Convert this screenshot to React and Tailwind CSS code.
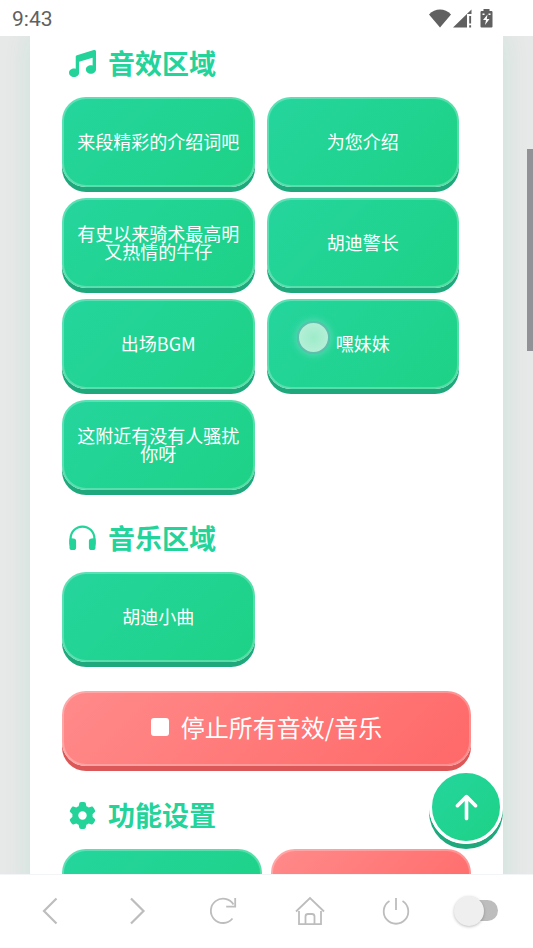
import { useState } from 'react';
import { FaMusic, FaGear, FaArrowUp } from 'react-icons/fa6';

const effects = [
    '来段精彩的介绍词吧',
    '为您介绍',
    '有史以来骑术最高明又热情的牛仔',
    '胡迪警长',
    '出场BGM',
    '嘿妹妹',
    '这附近有没有人骚扰你呀',
];

const songs = ['胡迪小曲'];

const green = 'border-2 border-white/25 bg-linear-135 from-[#25d59d] to-[#1dd286] bg-origin-border shadow-[0_5px_0_#1fa87c]';
const red = 'border-2 border-white/25 bg-linear-135 from-[#ff8a8a] to-[#ff6868] bg-origin-border shadow-[0_5px_0_#dc5858]';

function StatusBar() {
    return (
        <header className="flex h-9 shrink-0 items-center justify-between bg-white pt-px pl-3 pr-10 text-[#606060]">
            <span className="font-['Roboto',sans-serif] text-[21px] leading-6">9:43</span>
            <div className="flex items-center pb-px">
                <svg width="22" height="19" viewBox="0 0 22 19" fill="currentColor">
                    <path d="M11 18.500L0 5.500C6-1.200 16-1.200 22 5.500Z" />
                </svg>
                <svg className="ml-0.5" width="20" height="19" viewBox="0 0 20 19" fill="currentColor">
                    <path d="M0 18.500L18.500 0.500V5H14V18.500ZM16.200 7h1.900v7.500H16.200ZM16.200 16.300h1.900v2.200H16.200Z" />
                </svg>
                <svg className="ml-[7px]" width="13" height="19" viewBox="0 0 13 19">
                    <path fill="currentColor" d="M3.500 0h6v2H11.500Q12.500 2 12.500 3.200V17.500Q12.500 18.500 11.500 18.500H1.500Q0.500 18.500 0.500 17.500V3.200Q0.500 2 1.500 2H3.500Z" />
                    <path fill="#fff" d="M7.500 5.500L3 11h3l-1 5 4.500-6H6.800ZM2.500 4.500h2V6h-2ZM8.500 4.500h2V6h-2Z" />
                </svg>
            </div>
        </header>
    );
}

function HeadphonesIcon() {
    return (
        <svg width="27" height="27" viewBox="0 0 27 27" fill="currentColor">
            <path d="M1.600 19V13.500a11.900 11.900 0 0 1 23.800 0V19" fill="none" stroke="currentColor" strokeWidth="2.200" />
            <rect x="0.500" y="13.500" width="6.600" height="11.500" rx="2.600" />
            <rect x="19.900" y="13.500" width="6.600" height="11.500" rx="2.600" />
            <path d="M0.500 13.500h3v7h-3ZM23.500 13.500h3v7h-3Z" />
        </svg>
    );
}

function SectionTitle({ icon: Icon, children }) {
    return (
        <h2 className="mb-4 flex items-center gap-3 pl-[7px] text-[27px] leading-9 font-bold text-[#23d39a]">
            <Icon />
            {children}
        </h2>
    );
}

function SoundButton({ label, touched }) {
    return (
        <button type="button" className={`relative h-[90px] rounded-3xl px-3 pb-[3px] text-lg leading-[18px] text-white ${green}`}>
            {label}
            {touched && (
                <span className="absolute top-5 left-7 size-[33px] rounded-full border-2 border-[#5cc0ac] bg-radial from-[#9debc9] to-[#bdf1dd] shadow-[0_0_6px_2px_#50d8b0]" />
            )}
        </button>
    );
}

function SoundGrid({ items, touchedItem }) {
    return (
        <div className="grid grid-cols-2 gap-x-3 gap-y-[11px] pr-3">
            {items.map((item) => (
                <SoundButton key={item} label={item} touched={item === touchedItem} />
            ))}
        </div>
    );
}

function NavButton({ label, children }) {
    return (
        <button type="button" aria-label={label} className="flex items-center justify-center">
            <svg width="30" height="30" viewBox="0 0 30 30" fill="none" stroke="#bdbdbd" strokeWidth="1.8">
                {children}
            </svg>
        </button>
    );
}

function BottomBar() {
    const [on, setOn] = useState(false);

    return (
        <nav className="grid h-[74px] shrink-0 grid-cols-6 items-center border-t border-gray-100 bg-white px-2 pb-0.5">
            <NavButton label="后退">
                <path d="M20.500 2.500L8 15l12.500 12.500" strokeWidth="2.200" />
            </NavButton>
            <NavButton label="前进">
                <path d="M9 2.500L21.500 15 9 27.500" strokeWidth="2.200" />
            </NavButton>
            <NavButton label="刷新">
                <path d="M24.500 22.500A12.200 12.200 0 1 1 25.500 8.500M27.200 2v8.700h-9" />
            </NavButton>
            <NavButton label="主页">
                <path d="M1 15.500L15 2l14 13.500M4 15v13.200h22V15M10.500 28V20.500q0-2.500 2.500-2.500h4q2.500 0 2.500 2.500v7.500" />
            </NavButton>
            <NavButton label="退出">
                <path d="M8.500 5a12.300 12.300 0 1 0 13 0M15 2v12" />
            </NavButton>
            <label className="flex items-center justify-center pr-3">
                <input
                    type="checkbox"
                    aria-label="开关"
                    checked={on}
                    onChange={() => setOn(!on)}
                    className="peer sr-only"
                />
                <span className="flex h-[21px] w-11 items-center rounded-full bg-linear-to-r from-transparent from-25% to-[#bdbdbd] to-25% peer-checked:justify-end">
                    <span className="size-[30px] rounded-full bg-[#efefef] shadow-[0_1px_3px_rgba(0,0,0,0.25)]" />
                </span>
            </label>
        </nav>
    );
}

export default function App() {
    return (
        <div className="flex h-screen flex-col overflow-hidden bg-white font-['Noto_Sans_CJK_SC',sans-serif]">
            <StatusBar />
            <main className="relative min-h-0 flex-1 overflow-hidden bg-[#e7e8e8] px-[30px]">
                <div className="min-h-full bg-white px-8 pt-[9px] pb-10 shadow-[0_0_24px_rgba(30,210,150,0.14)]">
                    <section>
                        <SectionTitle icon={FaMusic}>音效区域</SectionTitle>
                        <SoundGrid items={effects} touchedItem="嘿妹妹" />
                    </section>

                    <section className="mt-[30px]">
                        <SectionTitle icon={HeadphonesIcon}>音乐区域</SectionTitle>
                        <SoundGrid items={songs} />
                        <button
                            type="button"
                            className={`mt-[29px] flex h-[75px] w-full items-center justify-center gap-3 rounded-3xl pb-[3px] text-2xl text-white ${red}`}
                        >
                            <span className="size-[18px] rounded-[3px] bg-white" />
                            停止所有音效/音乐
                        </button>
                    </section>

                    <section className="mt-[31px]">
                        <SectionTitle icon={FaGear}>功能设置</SectionTitle>
                        <div className="grid grid-cols-2 gap-[9px]">
                            <button type="button" aria-label="循环播放" className={`h-[75px] rounded-3xl ${green}`} />
                            <button type="button" aria-label="重叠播放" className={`h-[75px] rounded-3xl ${red}`} />
                        </div>
                    </section>
                </div>

                <button
                    type="button"
                    aria-label="回到顶部"
                    className="absolute right-[30px] bottom-[30px] flex size-[74px] items-center justify-center rounded-full border-3 border-white bg-linear-135 from-[#25d59d] to-[#1dd286] text-[29px] text-white shadow-[0_5px_0_#1fa87c]"
                >
                    <FaArrowUp />
                </button>
                <div className="absolute top-[113px] right-0 h-[202px] w-1.5 bg-[#929296]" />
            </main>
            <BottomBar />
        </div>
    );
}
